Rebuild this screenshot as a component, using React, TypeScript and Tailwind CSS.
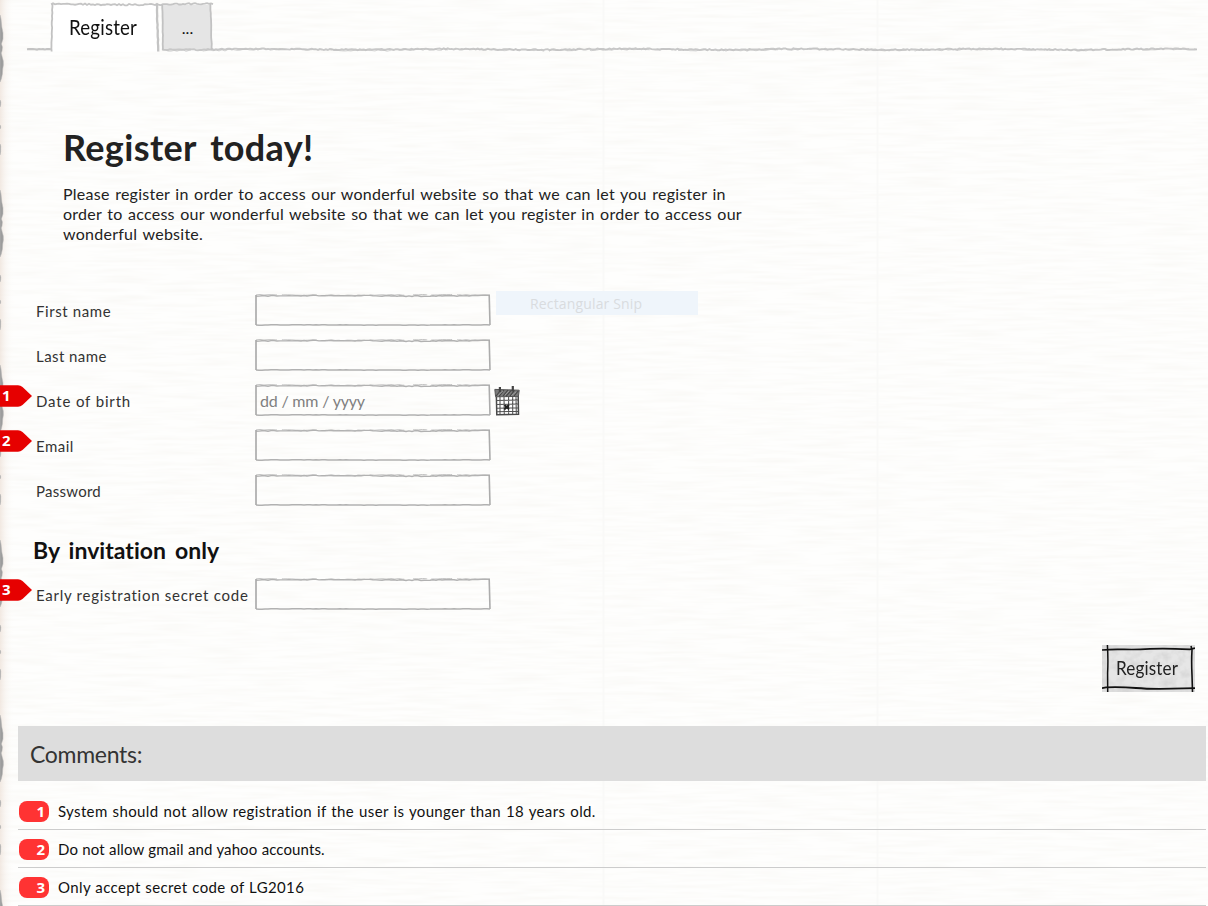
import type { ReactNode } from "react";

const noise = (n: number) => {
  const v = Math.sin(n * 127.1 + 11.7) * 43758.5453;
  return v - Math.floor(v);
};

/** Slightly wobbly pencil stroke between two points. */
function stroke(x1: number, y1: number, x2: number, y2: number, seed: number, wobble: number, step = 3) {
  const len = Math.hypot(x2 - x1, y2 - y1);
  const count = Math.max(2, Math.round(len / step));
  const nx = -(y2 - y1) / len;
  const ny = (x2 - x1) / len;
  let d = "";
  for (let i = 0; i <= count; i++) {
    const t = i / count;
    const slow = Math.sin(t * len * 0.035 + seed) * wobble * 0.35;
    const off = slow + (noise(i + seed * 31) - 0.5) * wobble;
    d += `${i ? "L" : "M"}${(x1 + (x2 - x1) * t + nx * off).toFixed(2)} ${(y1 + (y2 - y1) * t + ny * off).toFixed(2)}`;
  }
  return d;
}

function PaperBackground() {
  return (
    <svg className="pointer-events-none absolute inset-0" width="1208" height="906" aria-hidden="true">
      <defs>
        <filter id="paper" x="0" y="0" width="100%" height="100%">
          <feTurbulence type="fractalNoise" baseFrequency="0.02 0.27" numOctaves="2" seed="4" />
          <feColorMatrix values="0 0 0 0 0.8  0 0 0 0 0.77  0 0 0 0 0.7  0.34 0 0 0 -0.125" />
        </filter>
        <linearGradient id="edgeTint">
          <stop offset="0" stopColor="#eadbd0" stopOpacity="0.6" />
          <stop offset="0.4" stopColor="#f4ece6" stopOpacity="0.4" />
          <stop offset="1" stopColor="#fdfdfb" stopOpacity="0" />
        </linearGradient>
      </defs>
      <rect width="1208" height="906" filter="url(#paper)" />
      <rect width="14" height="906" fill="url(#edgeTint)" />
      <path d="M603.5 0V906M877.5 0V906" stroke="#f9f9f8" strokeWidth="2" />
      {[0, 175, 350, 525, 700, 875].map((y) => (
        <g key={y} transform={`translate(0 ${y})`} fill="#9c9c9c" stroke="#b9b9b9" strokeWidth="0.5">
          <path d="M0 15L1 19L1.8 27L3 33L3 39L2 42L1.4 44L2.4 47L2 51L1.2 53L2.2 57L3.3 61L3.4 65L2.7 69L2.4 74L1.3 79L0 82Z" />
          <path d="M0 100L.8 102L.6 105L0 107ZM0 125L.8 127L0 129ZM0 144L.7 146L.6 152L0 155Z" />
        </g>
      ))}
    </svg>
  );
}

function FieldFrame() {
  return (
    <svg className="absolute inset-0" width="236" height="32" aria-hidden="true" fill="none">
      <path d={stroke(1, 1.9, 235, 1.7, 2, 0.9, 3)} stroke="#b1b1b1" strokeWidth="1.4" />
      <path d={stroke(1, 1, 235, 1, 5, 0.8, 4)} stroke="#b5b5b5" strokeWidth="0.8" strokeDasharray="21 5 35 9 14 4" />
      <path d={stroke(1, 31, 235, 31, 3, 0.4, 3)} stroke="#b1b1b1" strokeWidth="1.5" />
      <path d="M1 1V31" stroke="#acacac" strokeWidth="1.7" />
      <path d="M234.2 1L235 31" stroke="#acacac" strokeWidth="1.6" />
    </svg>
  );
}

function CalendarIcon() {
  return (
    <svg className="ml-[3px] mt-[2px] shrink-0" width="27" height="31" viewBox="0 0 27 31" fill="none" aria-hidden="true">
      <path d="M2.4 11L2.8 28.8L24.5 28.2L24.2 10" fill="#fff" stroke="#494949" strokeWidth="1.5" />
      <path d="M.8 3.4L25.2 4.2L24.4 10.4L1.6 10.8Z" fill="#7a7a7a" stroke="#555" />
      <path d="M2 10L7 4M5 10.5L10 4M9 10L14 4M12 10.4L17.5 4M16 10L20.5 4.4M20 10L24.2 5" stroke="#444" strokeWidth="1.1" />
      <path d="M4 9.5L9 5M11 9L15 5M17.5 9.5L22 6" stroke="#a6a6a6" strokeWidth="0.7" />
      <path d="M5.9 1V6M18.8 0V5.5" stroke="#444" strokeWidth="2.2" />
      <path d="M2 14.4L24.5 14M2 18.4L24.7 18M2.5 22.2L24.5 22M2.5 25.7L24.5 25.4M6 11V28.5M10 11L10.3 28.7M14.6 11V28.3M18.7 10.5V28.4M22 11L22.3 28" stroke="#505050" strokeWidth="1.05" />
      <path d="M10.5 19L15 23.3M15 18.7L10.3 23.5M11 21H15" stroke="#222" strokeWidth="1.8" />
    </svg>
  );
}

function Flag({ n, top }: { n: number; top: string }) {
  return (
    <div className={`absolute left-0 ${top} h-[22px] w-8`}>
      <svg className="absolute inset-0" width="32" height="22" aria-hidden="true">
        <path d="M0 .2H18Q20.5 .2 22.5 2L32 11L22.5 20Q20.5 21.8 18 21.8H0Z" fill="#e60000" />
      </svg>
      <span className="relative block pl-[2px] font-['Noto_Sans',sans-serif] text-[15px] font-bold leading-5 text-white">{n}</span>
    </div>
  );
}

function Row({ label, tracking, placeholder, children }: { label: string; tracking: string; placeholder?: string; children?: ReactNode }) {
  return (
    <div className="flex h-[45px] items-start">
      <label className={`w-[219px] shrink-0 whitespace-nowrap pt-[7px] text-[15px] leading-5 text-[#333] ${tracking}`}>{label}</label>
      <div className="relative h-8 w-[236px] shrink-0">
        <FieldFrame />
        {placeholder && (
          <span className="relative block pl-[5px] pt-[7px] text-[16px] leading-5 tracking-[-0.2px] text-[#808080]">{placeholder}</span>
        )}
      </div>
      {children}
    </div>
  );
}

function Tabs() {
  return (
    <nav className="relative flex h-[52px] pl-[51px] pt-1">
      <svg className="absolute inset-0" width="1208" height="54" fill="none" aria-hidden="true">
        <path d="M52 4H158V51.6H52Z" fill="#fff" />
        <path d="M163 5H211V49H163Z" fill="#e5e5e5" />
        <path d={stroke(27, 49.5, 51, 49.5, 4, 0.7, 2)} stroke="#c3c3c3" strokeWidth="2.1" />
        <path d={stroke(162, 49.3, 1197, 49.3, 1, 1.2, 2)} stroke="#c8c8c8" strokeWidth="1.9" />
        <path d={stroke(162, 50, 1197, 49.7, 7, 1.8, 3)} stroke="#c2c2c2" strokeWidth="0.7" strokeDasharray="30 12 61 8 17 5" />
        <path d={stroke(51, 4.4, 213, 4, 5, 1.5, 2)} stroke="#c4c4c4" strokeWidth="1.8" />
        <path d={stroke(52.3, 4, 51.7, 51.5, 6, 0.5)} stroke="#c2c2c2" strokeWidth="1.8" />
        <path d={stroke(157, 4, 158.2, 51.5, 8, 0.5)} stroke="#c4c4c4" strokeWidth="2.3" />
        <path d={stroke(162.4, 5, 162.8, 50, 9, 0.5)} stroke="#c2c2c2" strokeWidth="1.8" />
        <path d={stroke(210.5, 4, 211.5, 50, 3, 0.5)} stroke="#c2c2c2" strokeWidth="1.8" />
      </svg>
      <span className="relative w-[111px] pl-[18px] pt-2">
        <span className="inline-block origin-left scale-x-[0.89] text-[21px] leading-[30px] tracking-[0.2px] text-[#111]">Register</span>
      </span>
      <span className="relative w-[51px] pt-[14px] text-center text-[16px] leading-5 text-[#111]">...</span>
    </nav>
  );
}

function RegisterButton() {
  return (
    <button className="relative block h-[47px] w-[93px] bg-[#dedede] text-left">
      <svg className="absolute inset-0" width="93" height="47" fill="none" aria-hidden="true">
        <defs>
          <filter id="grain" x="0" y="0" width="100%" height="100%">
            <feTurbulence type="fractalNoise" baseFrequency="0.12" numOctaves="3" seed="8" />
            <feColorMatrix values="0 0 0 0 0.6  0 0 0 0 0.6  0 0 0 0 0.6  1.2 0 0 0 -0.45" />
          </filter>
        </defs>
        <path d="M6 5H90V43H6Z" fill="#e6e6e6" />
        <rect width="93" height="47" filter="url(#grain)" />
        <path d="M0 5Q10 4 22 4.4T48 3.9T88 4.4L93 3.2" stroke="#111" strokeWidth="1.7" />
        <path d="M0 43.2L4 42.3Q20 41.8 34 43T70 43.7L93 43.2" stroke="#111" strokeWidth="1.8" />
        <path d="M5.4 0Q6.3 15 5.6 28L5.7 47" stroke="#111" strokeWidth="1.5" />
        <path d="M89 1L90 5Q89.3 16 90 30L90.5 47" stroke="#111" strokeWidth="1.6" />
      </svg>
      <span className="relative block pb-[2px] pl-[14px]">
        <span className="inline-block origin-left scale-x-[0.9] text-[19px] leading-7 tracking-[0.15px] text-[#222]">Register</span>
      </span>
    </button>
  );
}

const comments = [
  { n: 1, text: "System should not allow registration if the user is younger than 18 years old.", spacing: "tracking-[0.36px] [word-spacing:0.8px]" },
  { n: 2, text: "Do not allow gmail and yahoo accounts.", spacing: "tracking-[0.1px] [word-spacing:0.4px]" },
  { n: 3, text: "Only accept secret code of LG2016", spacing: "tracking-[0.37px] [word-spacing:0.5px]" },
];

export default function App() {
  return (
    <div className="relative h-[906px] w-[1208px] overflow-hidden bg-[#fefefd] font-['Lato',sans-serif]">
      <PaperBackground />
      <div className="relative flex h-full flex-col">
        <Tabs />
        <header className="h-[242px] shrink-0 pl-[63px] pt-[75px]">
          <h1 className="text-[36px] font-bold leading-10 tracking-[0.35px] text-[#222] [word-spacing:5px]">Register today!</h1>
          <p className="mt-[17px] whitespace-nowrap text-[16px] leading-5 tracking-[0.26px] text-[#222] [word-spacing:1.1px]">
            Please register in order to access our wonderful website so that we can let you register in
            <br />
            order to access our wonderful website so that we can let you register in order to access our
            <br />
            wonderful website.
          </p>
        </header>
        <form className="shrink-0 pl-9">
          <Row label="First name" tracking="tracking-[0.6px]" />
          <Row label="Last name" tracking="tracking-[0.43px]" />
          <Row label="Date of birth" tracking="tracking-[0.85px]" placeholder="dd / mm / yyyy">
            <CalendarIcon />
          </Row>
          <Row label="Email" tracking="tracking-[0.5px]" />
          <Row label="Password" tracking="tracking-[0.25px]" />
          <h2 className="-ml-[3px] mb-[14px] mt-4 text-[23px] font-bold leading-[30px] tracking-[0.02px] text-[#111] [word-spacing:3.5px]">By invitation only</h2>
          <div className="-mt-px">
            <Row label="Early registration secret code" tracking="tracking-[0.73px]" />
          </div>
        </form>
        <div className="mt-[22px] flex shrink-0 justify-end pr-[13px]">
          <RegisterButton />
        </div>
        <section className="ml-[18px] mr-[2px] mt-[34px] shrink-0">
          <h3 className="h-[55px] bg-[#ddd] pl-3 text-[23px] leading-[57px] tracking-[-0.3px] text-[#333]">Comments:</h3>
          <ul className="pt-[11px]">
            {comments.map((c) => (
              <li key={c.n} className="flex h-[38px] items-center border-b border-[#ccc] pl-px pt-px">
                <span className="h-[21px] w-[30px] rounded-[8px] bg-[#ff3333] pr-1 text-right font-['Noto_Sans',sans-serif] text-[15px] font-bold leading-[21px] text-white">{c.n}</span>
                <span className={`pl-[9px] text-[15px] leading-5 text-[#111] ${c.spacing}`}>{c.text}</span>
              </li>
            ))}
          </ul>
        </section>
      </div>
      <Flag n={1} top="top-[385px]" />
      <Flag n={2} top="top-[430px]" />
      <Flag n={3} top="top-[579px]" />
      <div className="absolute left-[496px] top-[291px] h-6 w-[202px] bg-[#eff5fb] pl-[34px] pt-px font-['Open_Sans',sans-serif] text-[14px] leading-6 tracking-[0.15px] text-[#d9dcdf]">
        Rectangular Snip
      </div>
    </div>
  );
}
